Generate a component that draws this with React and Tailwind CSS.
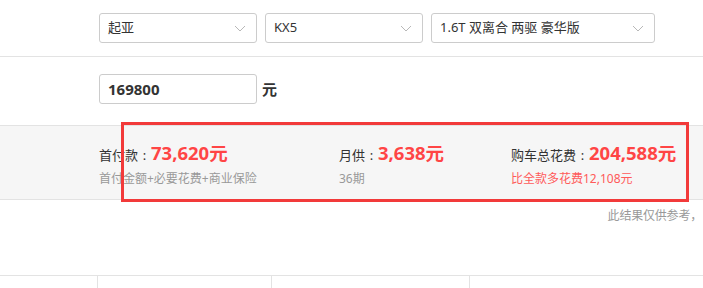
import React from "react";

const font = { fontFamily: '"Noto Sans", "Noto Sans CJK SC", sans-serif' };

function Chevron() {
  return (
    <svg width="12" height="7" viewBox="0 0 12 7" className="shrink-0">
      <path d="M1 1 L6 6 L11 1" fill="none" stroke="#b8b8b8" strokeWidth="1" />
    </svg>
  );
}

function Select({ w, text }) {
  return (
    <div className={`${w} h-[30px] border border-[#cccccc] rounded-[3px] bg-white flex items-center justify-between pl-[8px] pr-[10px] text-[13px] text-[#333333]`}>
      <span className="whitespace-nowrap">{text}</span>
      <Chevron />
    </div>
  );
}

function Colon() {
  return <span className="inline-block w-[13px] text-center">:</span>;
}

export default function App() {
  return (
    <div lang="zh-CN" className="relative w-[703px] h-[288px] overflow-hidden bg-white" style={font}>
      {/* select row */}
      <div className="h-[57px] border-b border-[#e3e3e3] flex items-start pt-[13px] pl-[99px] gap-[8px]">
        <Select w="w-[158px]" text="起亚" />
        <Select w="w-[158px]" text="KX5" />
        <Select w="w-[224px]" text="1.6T 双离合 两驱 豪华版" />
      </div>
      {/* price row */}
      <div className="h-[68px] flex items-start pt-[17px] pl-[99px]">
        <div className="w-[158px] h-[30px] border border-[#cccccc] rounded-[3px] flex items-center pl-[8px] text-[15px] font-bold text-[#333333]">
          169800
        </div>
        <span className="ml-[5px] mt-[4px] text-[15px] font-bold text-[#333333]">元</span>
      </div>
      {/* result band */}
      <div className="h-[75px] bg-[#f6f6f6] border-t border-b border-[#e3e3e3] flex pl-[99px] pt-[18px]">
        <div className="w-[240px] flex flex-col">
          <div className="flex items-baseline h-[21px]">
            <span className="text-[13px] text-[#333333]">首付款<Colon /></span>
            <span className="text-[18.5px] font-bold text-[#ff4545] leading-none">73,620元</span>
          </div>
          <div className="mt-[5px] text-[12px] text-[#999999]">首付金额+必要花费+商业保险</div>
        </div>
        <div className="w-[172px] flex flex-col">
          <div className="flex items-baseline h-[21px]">
            <span className="text-[13px] text-[#333333]">月供<Colon /></span>
            <span className="text-[18.5px] font-bold text-[#ff4545] leading-none">3,638元</span>
          </div>
          <div className="mt-[5px] text-[12px] text-[#999999]">36期</div>
        </div>
        <div className="flex flex-col">
          <div className="flex items-baseline h-[21px]">
            <span className="text-[13px] text-[#333333]">购车总花费<Colon /></span>
            <span className="text-[18.5px] font-bold text-[#ff4545] leading-none">204,588元</span>
          </div>
          <div className="mt-[5px] text-[12px] text-[#ff5a5a]">比全款多花费12,108元</div>
        </div>
      </div>
      {/* note */}
      <div className="flex justify-end pr-[1px] pt-[7px] h-[75px] text-[12px] text-[#999999] whitespace-nowrap">
        <span className="tracking-[-0.2px]">此结果仅供参考，</span>
      </div>
      {/* bottom table */}
      <div className="border-t border-[#e3e3e3] flex h-[20px]">
        <div className="w-[98px] border-r border-[#e3e3e3]" />
        <div className="w-[174px] border-r border-[#e3e3e3]" />
        <div className="w-[198px] border-r border-[#e3e3e3]" />
        <div className="flex-1" />
      </div>
      {/* red annotation box */}
      <div className="absolute left-[121px] top-[122px] w-[568px] h-[80px] border-[3px] border-[#f23a3a] pointer-events-none" />
    </div>
  );
}
